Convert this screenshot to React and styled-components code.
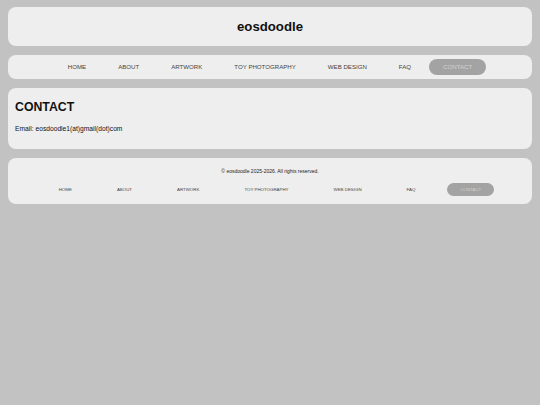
import React from 'react';
import styled, { createGlobalStyle } from 'styled-components';

const GlobalStyle = createGlobalStyle`
  html, body {
    margin: 0;
    padding: 0;
    background: #c2c2c2;
    font-family: "Liberation Sans", Arial, sans-serif;
  }
`;

const Page = styled.div`
  display: flex;
  flex-direction: column;
  gap: 9px;
  padding: 7px 8px;
`;

const Panel = styled.div`
  background: #eeeeee;
  border-radius: 8px;
`;

const Header = styled(Panel)`
  height: 39px;
  display: flex;
  align-items: center;
  justify-content: center;
`;

const Title = styled.h1`
  margin: 0;
  font-size: 13.2px;
  font-weight: bold;
  color: #111;
`;

const NavBar = styled(Panel)`
  height: 24px;
  display: flex;
  align-items: center;
  justify-content: center;
`;

const Links = styled.ul`
  list-style: none;
  margin: 0;
  padding: 0;
  display: flex;
  align-items: center;
  gap: ${p => p.$gap}px;
`;

const Link = styled.li`
  font-size: ${p => p.$size}px;
  line-height: 1;
  padding: ${p => p.$pad};
  border-radius: 999px;
  color: ${p => (p.$active ? '#d2d2d2' : '#444')};
  background: ${p => (p.$active ? '#a3a3a3' : 'transparent')};
`;

const Content = styled(Panel)`
  height: 61px;
  box-sizing: border-box;
  padding: 12px 7px 0;
`;

const Heading = styled.h2`
  margin: 0;
  font-size: 12.3px;
  font-weight: bold;
  color: #111;
  line-height: 14px;
`;

const Text = styled.p`
  margin: 11px 0 0;
  font-size: 6.7px;
  color: #111;
`;

const Footer = styled(Panel)`
  height: 46px;
  box-sizing: border-box;
  padding-top: 10px;
  display: flex;
  flex-direction: column;
  align-items: center;
  gap: 9px;
`;

const Copy = styled.p`
  margin: 0;
  font-size: 5px;
  color: #222;
`;

const items = ['HOME', 'ABOUT', 'ARTWORK', 'TOY PHOTOGRAPHY', 'WEB DESIGN', 'FAQ', 'CONTACT'];

const Nav = ({ size, pad, gap }) => (
  <Links $gap={gap}>
    {items.map(i => (
      <Link key={i} $size={size} $pad={pad} $active={i === 'CONTACT'}>{i}</Link>
    ))}
  </Links>
);

const App = () => (
  <>
    <GlobalStyle />
    <Page>
      <Header>
        <Title>eosdoodle</Title>
      </Header>
      <NavBar>
        <Nav size={6.12} pad="4.5px 14px" gap={4} />
      </NavBar>
      <Content>
        <Heading>CONTACT</Heading>
        <Text>Email: eosdoodle1(at)gmail(dot)com</Text>
      </Content>
      <Footer>
        <Copy>© eosdoodle 2025-2026. All rights reserved.</Copy>
        <Nav size={4.4} pad="4.5px 13px" gap={19} />
      </Footer>
    </Page>
  </>
);

export default App;
